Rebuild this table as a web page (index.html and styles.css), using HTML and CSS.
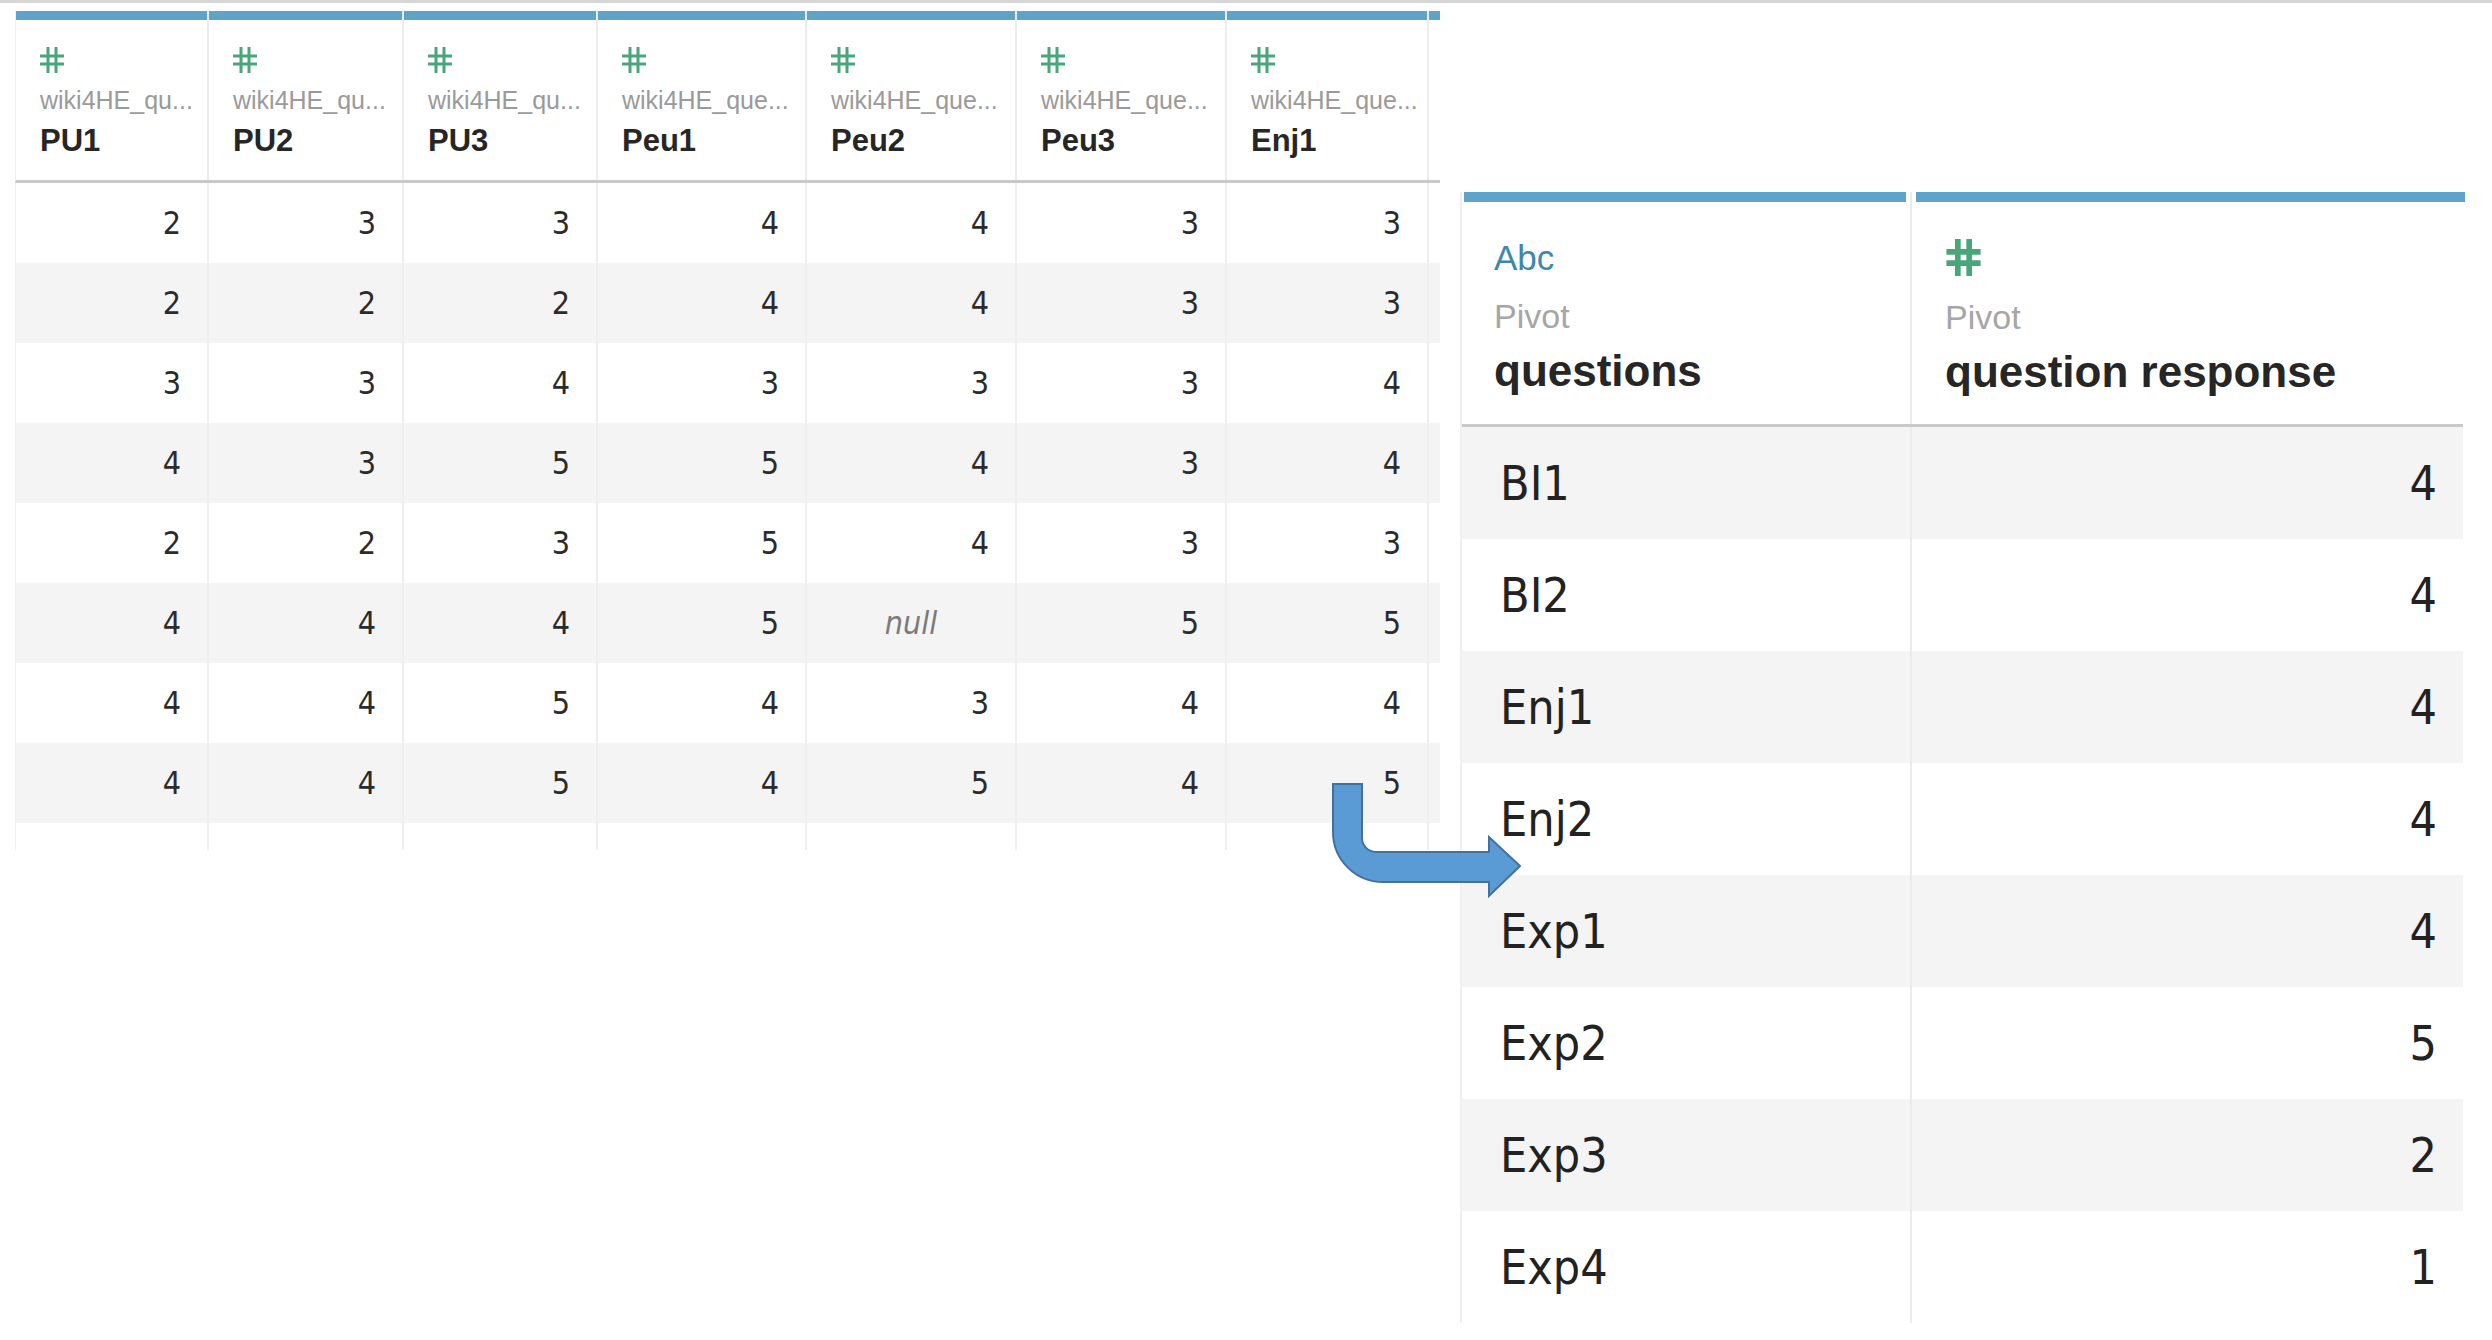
FILE: index.html
```html
<!DOCTYPE html>
<html lang="en">
<head>
<meta charset="utf-8">
<title>Pivot</title>
<link rel="stylesheet" href="styles.css">
</head>
<body>
<div class="topbar"></div>
<div class="stage">
  <div class="lt">
    <div class="lt-head">
      <div class="hc"><div class="bar"></div><div class="hc-body"><svg class="hash" viewBox="0 0 24 26"><path d="M8 0V26M16 0V26M0 9H24M0 17H24"/></svg><div class="src">wiki4HE_qu...</div><div class="name">PU1</div></div></div>
      <div class="hc"><div class="bar"></div><div class="hc-body"><svg class="hash" viewBox="0 0 24 26"><path d="M8 0V26M16 0V26M0 9H24M0 17H24"/></svg><div class="src">wiki4HE_qu...</div><div class="name">PU2</div></div></div>
      <div class="hc"><div class="bar"></div><div class="hc-body"><svg class="hash" viewBox="0 0 24 26"><path d="M8 0V26M16 0V26M0 9H24M0 17H24"/></svg><div class="src">wiki4HE_qu...</div><div class="name">PU3</div></div></div>
      <div class="hc"><div class="bar"></div><div class="hc-body"><svg class="hash" viewBox="0 0 24 26"><path d="M8 0V26M16 0V26M0 9H24M0 17H24"/></svg><div class="src">wiki4HE_que...</div><div class="name">Peu1</div></div></div>
      <div class="hc"><div class="bar"></div><div class="hc-body"><svg class="hash" viewBox="0 0 24 26"><path d="M8 0V26M16 0V26M0 9H24M0 17H24"/></svg><div class="src">wiki4HE_que...</div><div class="name">Peu2</div></div></div>
      <div class="hc"><div class="bar"></div><div class="hc-body"><svg class="hash" viewBox="0 0 24 26"><path d="M8 0V26M16 0V26M0 9H24M0 17H24"/></svg><div class="src">wiki4HE_que...</div><div class="name">Peu3</div></div></div>
      <div class="hc"><div class="bar"></div><div class="hc-body"><svg class="hash" viewBox="0 0 24 26"><path d="M8 0V26M16 0V26M0 9H24M0 17H24"/></svg><div class="src">wiki4HE_que...</div><div class="name">Enj1</div></div></div>
      <div class="hc sliver"><div class="bar"></div><div class="hc-body"></div></div>
    </div>
    <div class="lt-row"><div>2</div><div>3</div><div>3</div><div>4</div><div>4</div><div>3</div><div>3</div><div></div></div>
    <div class="lt-row alt"><div>2</div><div>2</div><div>2</div><div>4</div><div>4</div><div>3</div><div>3</div><div></div></div>
    <div class="lt-row"><div>3</div><div>3</div><div>4</div><div>3</div><div>3</div><div>3</div><div>4</div><div></div></div>
    <div class="lt-row alt"><div>4</div><div>3</div><div>5</div><div>5</div><div>4</div><div>3</div><div>4</div><div></div></div>
    <div class="lt-row"><div>2</div><div>2</div><div>3</div><div>5</div><div>4</div><div>3</div><div>3</div><div></div></div>
    <div class="lt-row alt"><div>4</div><div>4</div><div>4</div><div>5</div><div class="null">null</div><div>5</div><div>5</div><div></div></div>
    <div class="lt-row"><div>4</div><div>4</div><div>5</div><div>4</div><div>3</div><div>4</div><div>4</div><div></div></div>
    <div class="lt-row alt"><div>4</div><div>4</div><div>5</div><div>4</div><div>5</div><div>4</div><div>5</div><div></div></div>
    <div class="lt-row tail"><div></div><div></div><div></div><div></div><div></div><div></div><div></div><div></div></div>
  </div>

  <div class="rt">
    <div class="rt-head">
      <div class="rh"><div class="bar"></div><div class="rh-body"><div class="abc">Abc</div><div class="pivot">Pivot</div><div class="rname">questions</div></div></div>
      <div class="rh"><div class="bar"></div><div class="rh-body"><div class="abc"><svg class="hash big" viewBox="0 0 24 26"><path d="M8 0V26M16 0V26M0 9H24M0 17H24"/></svg></div><div class="pivot">Pivot</div><div class="rname">question response</div></div></div>
    </div>
    <div class="rt-row alt"><div class="q">BI1</div><div class="v">4</div></div>
    <div class="rt-row"><div class="q">BI2</div><div class="v">4</div></div>
    <div class="rt-row alt"><div class="q">Enj1</div><div class="v">4</div></div>
    <div class="rt-row"><div class="q">Enj2</div><div class="v">4</div></div>
    <div class="rt-row alt"><div class="q">Exp1</div><div class="v">4</div></div>
    <div class="rt-row"><div class="q">Exp2</div><div class="v">5</div></div>
    <div class="rt-row alt"><div class="q">Exp3</div><div class="v">2</div></div>
    <div class="rt-row"><div class="q">Exp4</div><div class="v">1</div></div>
  </div>

  <svg class="arrow" viewBox="0 0 205 130" width="205" height="130">
    <path d="M8 9 L37 9 L37 63 A14 14 0 0 0 51 77 L164 77 L164 62 L195 91 L164 121 L164 107 L58 107 A50 50 0 0 1 8 57 Z"/>
  </svg>
</div>
</body>
</html>
```

FILE: styles.css
```css
* { box-sizing: border-box; }
html, body { margin: 0; padding: 0; background: #ffffff; }
body { font-family: "Liberation Sans", Arial, sans-serif; color: #2b2b2b; width: 2492px; height: 1340px; overflow: hidden; }

.topbar { height: 3px; background: #d6d6d6; }

.stage { display: flex; align-items: flex-start; padding-left: 16px; }

/* ---------- left table ---------- */
.lt { margin-top: 8px; width: 1424px; }
.lt-head, .lt-row {
  display: grid;
  grid-template-columns: 193px 195px 194px 209px 210px 210px 202px 11px;
}
.lt-head { border-bottom: 3px solid #c9c9cb; }
.hc { border-right: 2px solid #ececec; height: 169px; }
.hc.sliver { border-right: 0; }
.hc .bar { height: 9px; background: #5fa3c8; margin-right: 0; }
.hc-body { padding: 27px 0 0 24px; }
.hash { display: block; width: 24px; height: 26px; fill: none; stroke: #4aa57a; stroke-width: 3; }
.src { margin-top: 12px; font-size: 25px; line-height: 30px; color: #9a9a9a; white-space: nowrap; }
.name { margin-top: 9px; font-size: 31px; line-height: 34px; font-weight: bold; color: #262626; }

.lt-row > div {
  height: 80px;
  border-right: 2px solid #efefef;
  text-align: right;
  padding-right: 26px;
  font-family: "DejaVu Sans Condensed", "Liberation Sans Narrow", "DejaVu Sans", sans-serif;
  font-stretch: condensed;
  font-size: 32px;
  line-height: 80px;
  color: #2b2b2b;
}
.lt-row > div:last-child { border-right: 0; padding: 0; }
.lt-row.alt { background: #f4f4f4; }
.lt-row > .null { text-align: center; padding-right: 0; font-style: italic; color: #7a7a7a; }
.lt-row.tail > div { height: 27px; }
.lt-row:not(.alt) { background: #ffffff; }
.lt-head, .lt-row { border-left: 1px solid #efefef; margin-left: -1px; }

/* ---------- right table ---------- */
.rt { margin-left: 20px; margin-top: 189px; width: 1003px; border-left: 2px solid #efefef; }
.rt-head, .rt-row { display: grid; grid-template-columns: 450px 553px; }
.rt-head { border-bottom: 3px solid #c9c9cb; }
.rh { height: 232px; }
.rh:first-child { border-right: 2px solid #ececec; }
.rh .bar { height: 10px; background: #5fa3c8; margin: 0 4px 0 2px; }
.rh:last-child .bar { margin: 0 0 0 4px; }
.rh-body { padding: 36px 0 0 32px; }
.rh:last-child .rh-body { padding-left: 33px; }
.abc { height: 40px; font-size: 35px; line-height: 40px; color: #3d88ab; }
.hash.big { width: 37px; height: 37px; stroke-width: 4; margin-top: 1px; }
.pivot { margin-top: 18px; font-size: 34px; line-height: 40px; color: #a6a6a6; }
.rname { margin-top: 10px; font-size: 44px; line-height: 50px; font-weight: bold; color: #262626; white-space: nowrap; }

.rt-row > div {
  height: 112px;
  font-family: "DejaVu Sans Condensed", "Liberation Sans Narrow", "DejaVu Sans", sans-serif;
  font-stretch: condensed;
  font-size: 48px;
  line-height: 112px;
  color: #222222;
}
.rt-row .q { padding-left: 38px; border-right: 2px solid #ececec; }
.rt-row .v { text-align: right; padding-right: 28px; }
.rt-row.alt { background: #f4f4f4; }

/* ---------- arrow overlay ---------- */
.arrow { position: absolute; left: 1325px; top: 775px; overflow: visible; }
.arrow path { fill: #5b9bd5; stroke: #41719c; stroke-width: 2; }
```
